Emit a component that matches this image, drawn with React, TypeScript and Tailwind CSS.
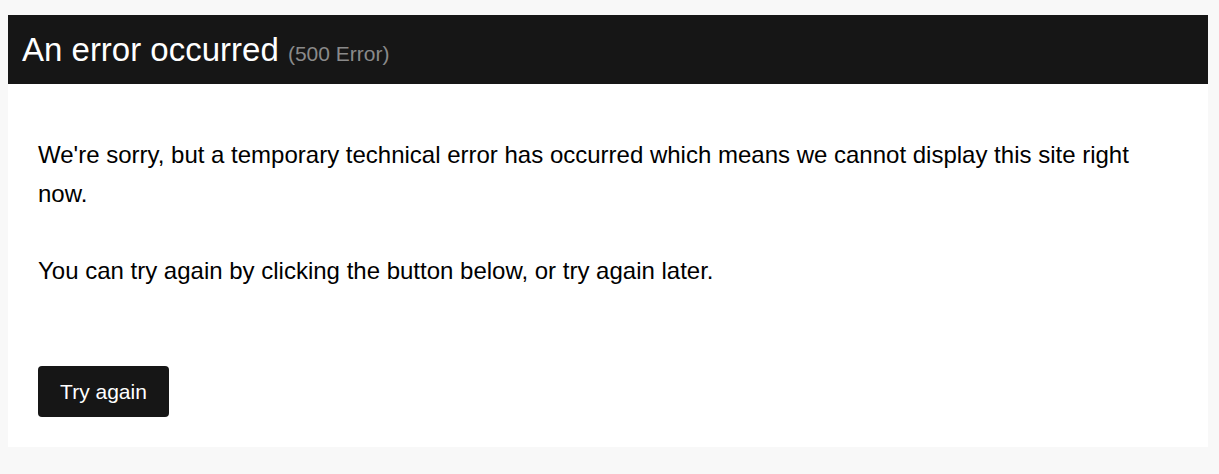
import React from "react";

export default function App() {
  return (
    <div className="min-h-[474px] w-full bg-[#f8f8f8] pt-[15px] px-[8px] pb-[27px] font-['Liberation_Sans',Arial,sans-serif]">
      <div className="w-[1200px]">
        <div className="h-[69px] bg-[#161616] pl-[14px] flex items-center">
          <h1 className="text-[33px] leading-none text-white font-normal">
            An error occurred{" "}
            <span className="text-[21px] text-[#8a8a8a]">(500 Error)</span>
          </h1>
        </div>
        <div className="bg-white px-[30px] pt-[52px] pb-[30px]">
          <p className="text-[24px] leading-[38.5px] text-black pr-[40px]">
            We're sorry, but a temporary technical error has occurred which means we cannot display this site right now.
            <br />
            <br />
            You can try again by clicking the button below, or try again later.
          </p>
          <div className="mt-[76px]">
            <button className="h-[51px] w-[131px] rounded-[4px] bg-[#161616] text-white text-[21px] leading-none">
              Try again
            </button>
          </div>
        </div>
      </div>
    </div>
  );
}
